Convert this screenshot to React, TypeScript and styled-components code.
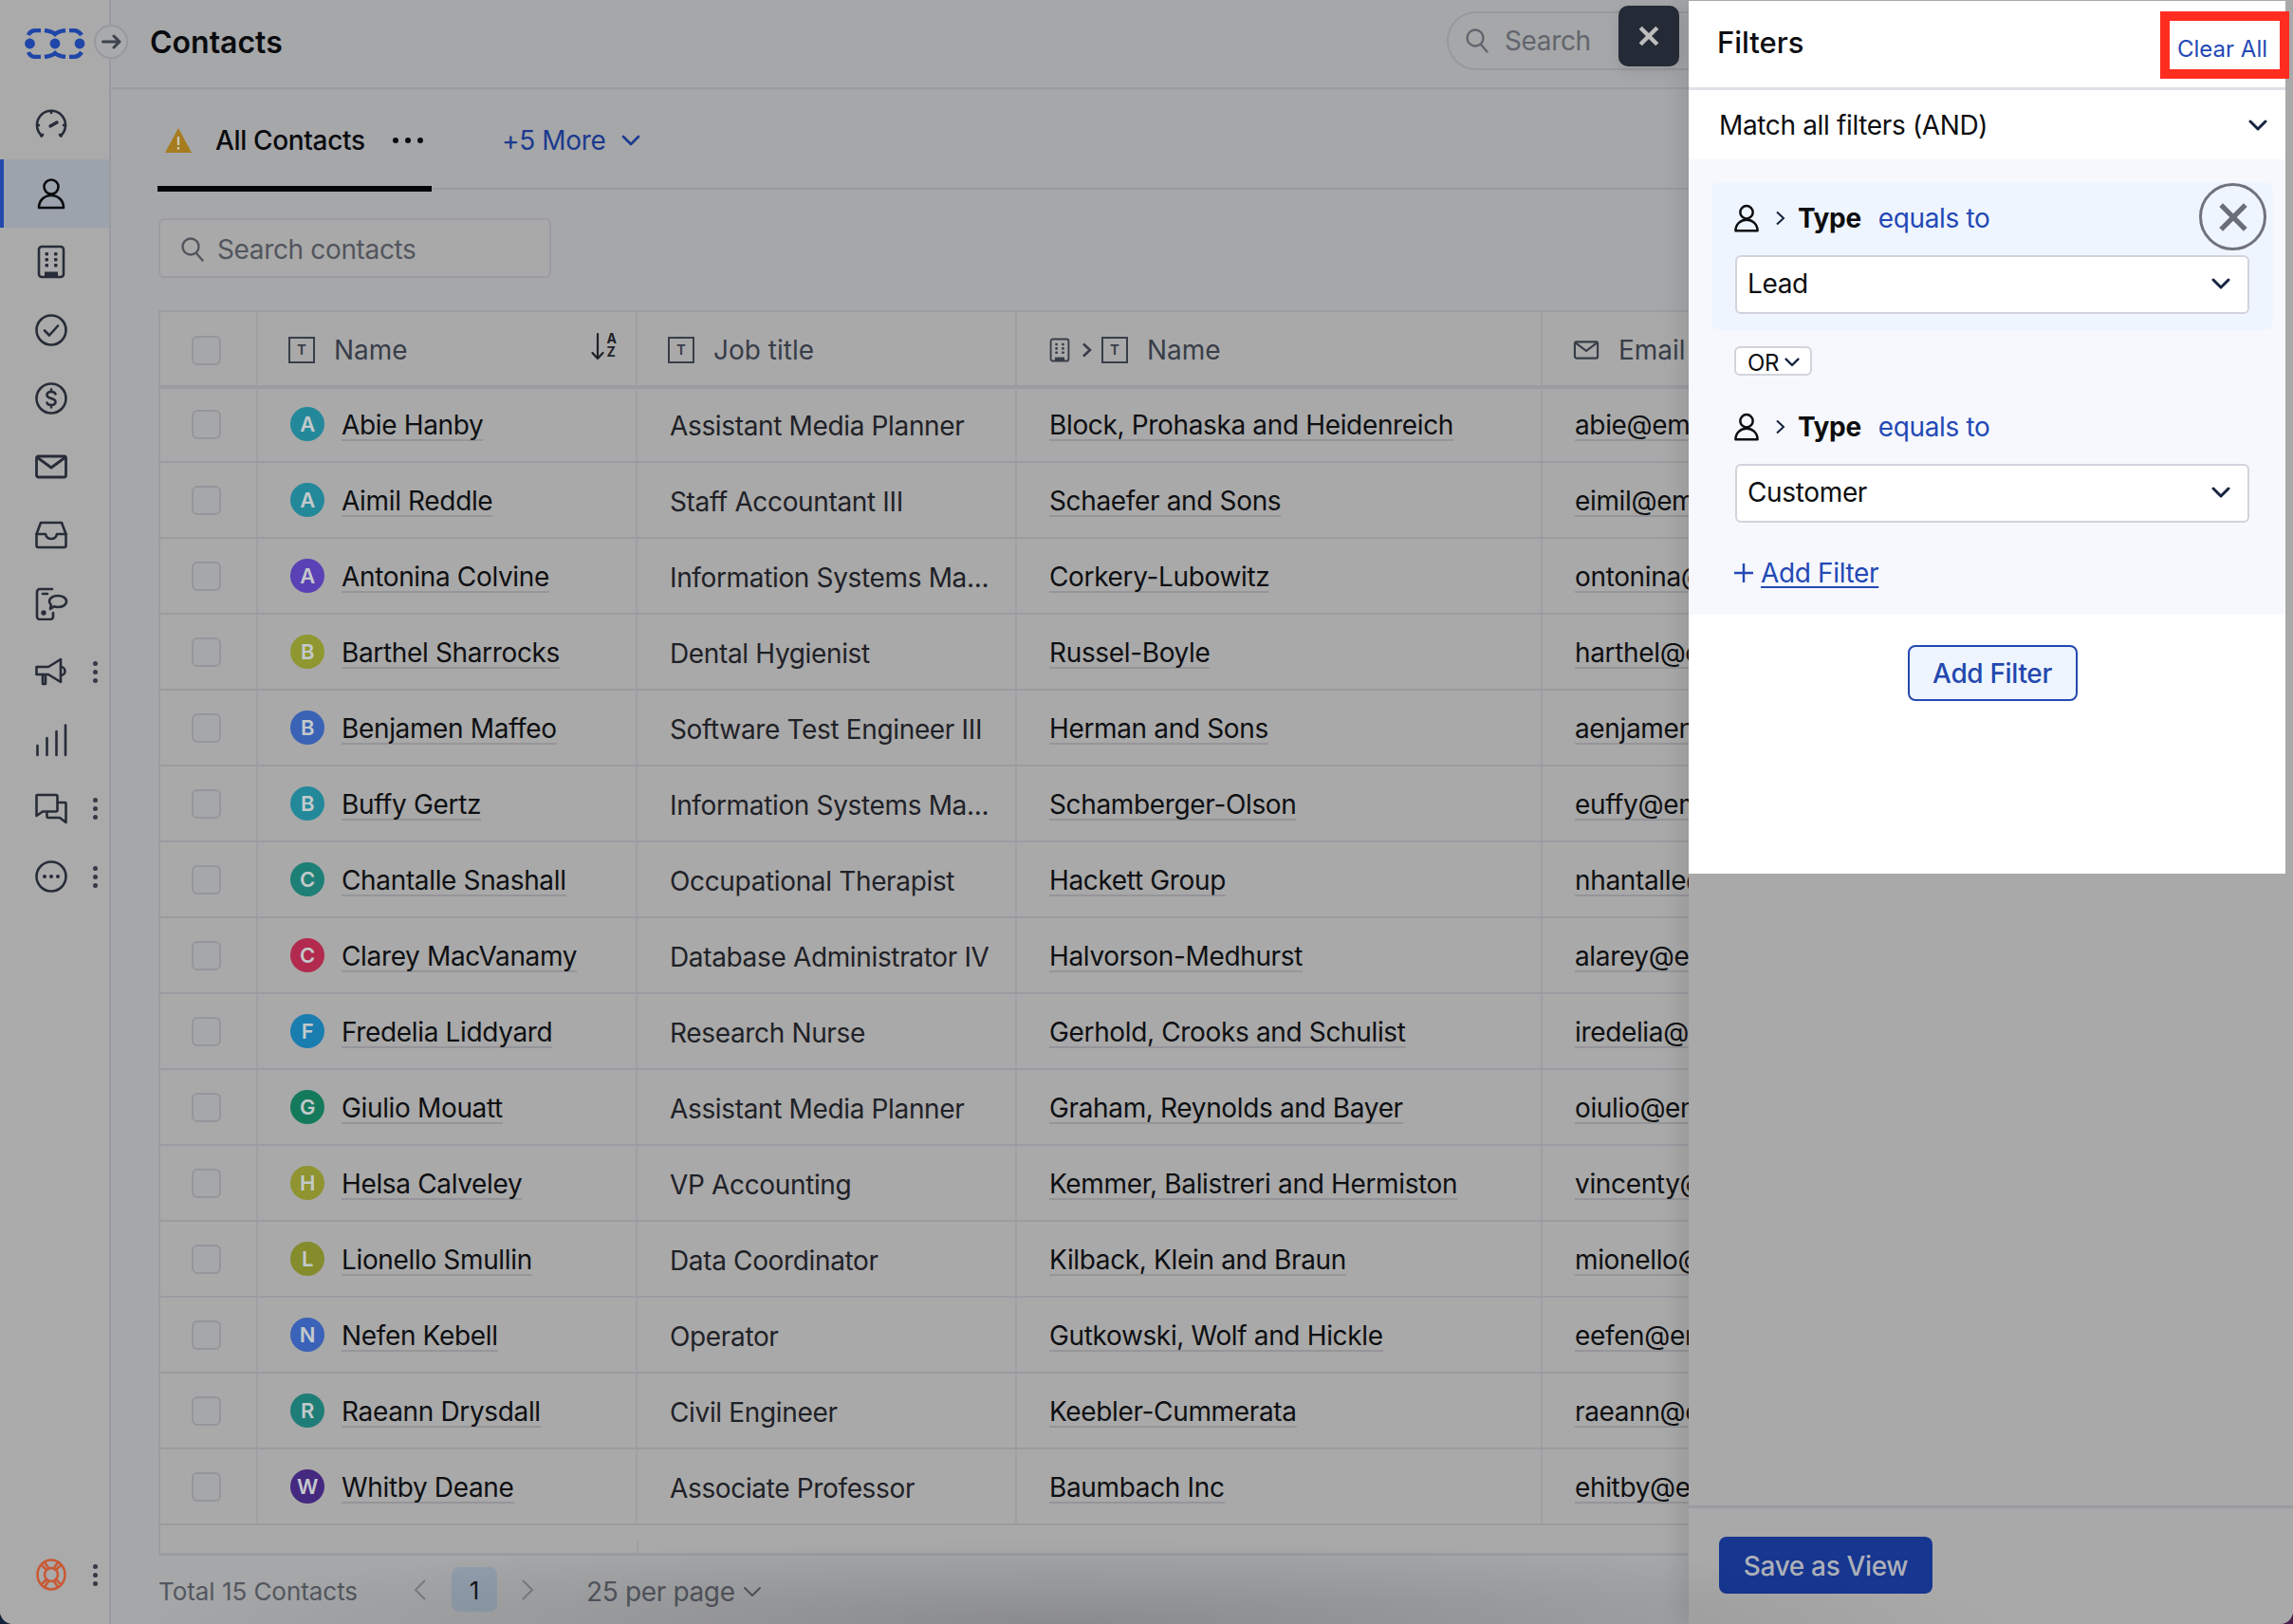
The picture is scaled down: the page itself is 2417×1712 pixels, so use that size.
import React from 'react';
import styled, { createGlobalStyle } from 'styled-components';

const GlobalStyle = createGlobalStyle`
	html, body {
		margin: 0;
		padding: 0;
		height: 100%;
		background: linear-gradient(90deg, #16233f 0%, #16233f 50%, #4a1f4d 100%);
		font-family: Inter, "Noto Sans", "Liberation Sans", sans-serif;
		overflow: hidden;
	}
	* {
		box-sizing: border-box;
	}
`;

const Shell = styled.div`
	position: relative;
	display: flex;
	width: 2417px;
	height: 1712px;
	overflow: hidden;
	background: #a9a9a9;
	border-radius: 0 0 14px 14px;
	letter-spacing: -0.35px;
`;

/* sidebar */
const Sidebar = styled.aside`
	position: relative;
	flex: 0 0 117px;
	display: flex;
	flex-direction: column;
	background: #aaaaaa;
	border-right: 2px solid #9a9ba0;
`;

const LogoSlot = styled.div`
	height: 96px;
	padding: 30px 0 0 26px;
`;

const ExpandButton = styled.div`
	position: absolute;
	top: 26px;
	right: -20px;
	z-index: 2;
	width: 36px;
	height: 36px;
	border-radius: 50%;
	border: 2px solid #98999e;
	background: #a9aaac;
	display: flex;
	align-items: center;
	justify-content: center;
	color: #3d424d;
`;

const NavItem = styled.div<{ $active?: boolean }>`
	height: 72px;
	display: flex;
	align-items: center;
	gap: 26px;
	padding-left: 36px;
	color: ${(p) => (p.$active ? '#0a0b0e' : '#272c38')};
	background: ${(p) => (p.$active ? '#9da3ad' : 'transparent')};
	box-shadow: ${(p) => (p.$active ? 'inset 4px 0 0 #2349ac' : 'none')};
`;

const NavFooter = styled(NavItem)`
	margin-top: auto;
	margin-bottom: 16px;
	color: #c85a35;
`;

const Kebab = styled.span`
	display: flex;
	flex-direction: column;
	gap: 4px;

	i {
		display: block;
		width: 5px;
		height: 5px;
		border-radius: 50%;
		background: #353a46;
	}
`;

/* main column */
const Main = styled.main`
	flex: 0 0 1663px;
	display: flex;
	flex-direction: column;
	overflow: hidden;
	background: #a6a7a9;
`;

const TopBar = styled.header`
	flex: 0 0 94px;
	min-height: 0;
	display: flex;
	align-items: center;
	justify-content: space-between;
	padding-left: 41px;
	border-bottom: 2px solid #9a9b9f;
`;

const PageTitle = styled.h1`
	margin: 0 0 4px;
	font-size: 32px;
	font-weight: 600;
	letter-spacing: 0;
	color: #0a0b0e;
`;

const GlobalSearch = styled.div`
	flex: 0 0 300px;
	margin-right: -45px;
	margin-top: -6px;
	height: 62px;
	display: flex;
	align-items: center;
	gap: 17px;
	padding-left: 18px;
	border: 2px solid #98999e;
	border-radius: 31px;
	font-size: 28px;
	color: #62656d;
`;

const TabBar = styled.div`
	flex: 0 0 106px;
	min-height: 0;
	display: flex;
	margin-left: 49px;
	border-bottom: 2px solid #9a9b9f;
`;

const ActiveTab = styled.div`
	flex: 0 0 289px;
	height: 108px;
	padding: 6px 0 0 8px;
	display: flex;
	align-items: center;
	border-bottom: 6px solid #05060a;
	font-size: 28px;
	font-weight: 500;
	color: #0a0b0e;
`;

const TabLabel = styled.span`
	margin-left: 25px;
`;

const TabDots = styled.span`
	display: flex;
	gap: 7px;
	margin-left: 29px;

	i {
		width: 6px;
		height: 6px;
		border-radius: 50%;
		background: #0a0b0e;
	}
`;

const MoreTabs = styled.div`
	margin-left: 74px;
	height: 100px;
	padding-top: 8px;
	display: flex;
	align-items: center;
	gap: 17px;
	font-size: 28px;
	color: #1c3a8e;
`;

const ContactSearch = styled.div`
	flex: 0 0 63px;
	width: 414px;
	margin: 30px 0 0 50px;
	display: flex;
	align-items: center;
	gap: 14px;
	padding: 3px 0 0 22px;
	border: 2px solid #9b9ca1;
	border-radius: 6px;
	background: #a9a9a9;
	font-size: 28px;
	color: #52555d;
`;

/* table */
const Table = styled.div`
	width: 1900px;
	margin: 34px 0 0 50px;
	border: 2px solid #9b9ca1;
	border-right: 0;
	border-bottom: 0;
	background: #a9a9a9;
	flex-shrink: 0;
`;

const Row = styled.div`
	display: grid;
	grid-template-columns: 103px 400px 400px 554px 1fr;
	height: 80px;
	border-bottom: 2px solid #9b9ca1;
`;

const HeadRow = styled(Row)`
	height: 81px;
	margin-bottom: -2px;
	border-bottom-width: 4px;
`;

const Cell = styled.div`
	display: flex;
	align-items: center;
	gap: 20px;
	padding-left: 34px;
	border-right: 2px solid #9f9fa4;
	font-size: 28px;
	color: #1f2127;
	white-space: nowrap;
	overflow: hidden;
`;

const JobCell = styled(Cell)`
	padding-top: 3px;
`;

const HeadCell = styled(Cell)`
	position: relative;
	font-weight: 400;
	letter-spacing: 0;
	color: #383d48;
	padding-left: 32px;
	padding-top: 2px;
`;

const CheckCell = styled(Cell)`
	padding-left: 33px;
`;

const HeadCheckCell = styled(CheckCell)`
	padding-top: 4px;
`;

const NameCell = styled(Cell)`
	gap: 18px;
`;

const Checkbox = styled.span`
	display: block;
	width: 31px;
	height: 31px;
	border: 2px solid #95969b;
	border-radius: 6px;
	background: #a6a7a9;
`;

const Avatar = styled.span<{ $color: string }>`
	flex: 0 0 36px;
	height: 36px;
	border-radius: 50%;
	background: ${(p) => p.$color};
	color: #c3c9cb;
	font-size: 22px;
	font-weight: 600;
	display: flex;
	align-items: center;
	justify-content: center;
`;

const LinkText = styled.span`
	display: inline-block;
	margin-top: 3px;
	line-height: 30px;
	border-bottom: 2px solid #95959a;
	color: #0e0f12;
`;

const TypeBox = styled.span`
	flex: 0 0 28px;
	height: 28px;
	border: 2px solid #383d48;
	display: flex;
	align-items: center;
	justify-content: center;
	font-size: 15px;
	font-weight: 600;
	color: #383d48;
`;

const SortIcon = styled.span`
	position: absolute;
	right: 20px;
	top: 21px;
	display: flex;
	gap: 3px;
	color: #1f2127;
`;

const SortLetters = styled.span`
	display: flex;
	flex-direction: column;
	font-size: 14px;
	font-weight: 700;
	line-height: 14px;
`;

const CompanyPath = styled.span`
	display: flex;
	align-items: center;
	gap: 10px;
`;

const TableEnd = styled.div`
	height: 32px;
	display: flex;
	align-items: flex-end;
	padding-left: 502px;
	border-bottom: 3px solid #9b9ca1;

	i {
		display: block;
		width: 2px;
		height: 12px;
		background: #9f9fa4;
	}
`;

const Pager = styled.div`
	height: 47px;
	margin: 12px 0 0 50px;
	display: flex;
	align-items: center;
	font-size: 26px;
	letter-spacing: -0.05px;
	color: #54575f;
`;

const PagerTotal = styled.span`
	width: 269px;
	margin-top: 4px;
`;

const PageNumber = styled.span`
	width: 48px;
	height: 47px;
	margin: 0 25px 0 26px;
	padding-top: 2px;
	display: flex;
	align-items: center;
	justify-content: center;
	border-radius: 8px;
	background: #919eac;
	color: #14161b;
`;

const PerPage = styled.span`
	margin: 4px 0 0 55px;
	display: flex;
	align-items: center;
	gap: 8px;
	font-size: 28px;
	letter-spacing: -0.35px;
`;

/* drawer under the dim layer */
const Drawer = styled.section`
	flex: 0 0 637px;
	display: flex;
	flex-direction: column;
	justify-content: flex-end;
	background: #a9a9a9;
	box-shadow: -10px 0 22px rgba(0, 0, 0, 0.09);
	position: relative;
`;

const DrawerFooter = styled.div`
	height: 125px;
	padding: 30px 0 0 32px;
	border-top: 3px solid #9b9ca1;
`;

const SaveButton = styled.button`
	width: 225px;
	height: 60px;
	margin: 0;
	border: 0;
	border-radius: 8px;
	background: #163690;
	color: #adb0b8;
	font: 500 28px Inter, sans-serif;
	letter-spacing: -0.35px;
	padding-top: 2px;
`;

const BottomShade = styled.div`
	position: absolute;
	left: 120px;
	right: 300px;
	bottom: 0;
	height: 90px;
	pointer-events: none;
	background: radial-gradient(ellipse 1000px 90px at 50% 100%, rgba(0, 0, 0, 0.17), rgba(0, 0, 0, 0) 100%);
`;

const DrawerClose = styled.div`
	position: absolute;
	left: 1706px;
	top: 6px;
	width: 64px;
	height: 64px;
	border-radius: 10px;
	background: #242a36;
	color: #bdbdbd;
	display: flex;
	align-items: center;
	justify-content: center;
	box-shadow: 0 4px 16px rgba(0, 0, 0, 0.1);
`;

/* filter popup */
const FilterPanel = styled.div`
	position: absolute;
	left: 1780px;
	top: 1px;
	width: 629px;
	height: 920px;
	display: flex;
	flex-direction: column;
	background: #ffffff;
	font-size: 28px;
	color: #0c0d10;
`;

const PanelHeader = styled.div`
	flex: 0 0 94px;
	min-height: 0;
	display: flex;
	justify-content: space-between;
	padding-left: 30px;
	border-bottom: 3px solid #e0e0e8;
`;

const PanelTitle = styled.h2`
	margin: 26px 0 0;
	font-size: 31px;
	line-height: 36px;
	font-weight: 500;
	letter-spacing: 0;
`;

const ClearAll = styled.a`
	width: 136px;
	height: 71px;
	margin: 11px -4px 0 0;
	border: 10px solid #ff2d20;
	background: #fff;
	position: relative;
	z-index: 2;
	display: flex;
	align-items: center;
	justify-content: center;
	padding: 7px 5px 0 0;
	font-size: 24px;
	letter-spacing: 0;
	white-space: nowrap;
	color: #2348b5;
`;

const MatchRow = styled.div`
	flex: 0 0 73px;
	display: flex;
	align-items: center;
	justify-content: space-between;
	padding: 0 19px 0 32px;
`;

const FilterList = styled.div`
	height: 480px;
	padding-top: 24px;
	background: #f6f8fd;
`;

const FilterBlock = styled.div<{ $active?: boolean }>`
	position: relative;
	margin: 0 13px 0 24px;
	padding: 0 25px;
	background: ${(p) => (p.$active ? '#eff5fe' : 'transparent')};
	border-radius: 8px;
	height: ${(p) => (p.$active ? '156px' : 'auto')};
`;

const FilterHead = styled.div`
	height: 77px;
	padding-bottom: 2px;
	display: flex;
	align-items: center;
	color: #0c0d10;
`;

const HeadIcon = styled.span`
	display: flex;
	margin-left: -4px;
`;

const HeadChevron = styled.span`
	display: flex;
	margin: 0 13px 0 14px;
`;

const FieldName = styled.strong`
	font-weight: 700;
	margin-right: 18px;
`;

const Operator = styled.span`
	color: #2348b5;
`;

const RemoveFilter = styled.div`
	position: absolute;
	right: 7px;
	top: 1px;
	width: 71px;
	height: 71px;
	border: 3px solid #70727c;
	border-radius: 50%;
	color: #6b6e78;
	display: flex;
	align-items: center;
	justify-content: center;
`;

const SelectBox = styled.div`
	height: 62px;
	display: flex;
	align-items: center;
	justify-content: space-between;
	padding: 0 18px 3px 11px;
	background: #fff;
	border: 2px solid #d2d3db;
	border-radius: 6px;
`;

const JoinSelect = styled.div`
	width: 82px;
	height: 31px;
	margin: 17px 0 16px 48px;
	display: flex;
	align-items: center;
	gap: 6px;
	padding: 3px 0 0 12px;
	background: #fff;
	border: 2px solid #d2d3db;
	border-radius: 6px;
	font-size: 24px;
`;

const AddFilterLink = styled.a`
	display: flex;
	align-items: center;
	gap: 8px;
	margin: 36px 0 0 48px;
	height: 34px;
	color: #2348b5;

	span {
		text-decoration: underline;
		text-underline-offset: 4px;
	}
`;

const AddFilterButton = styled.button`
	align-self: center;
	width: 179px;
	height: 59px;
	margin: 32px 0 0 11px;
	border: 2px solid #2348ae;
	border-radius: 8px;
	background: #eff5fe;
	color: #2348ae;
	font: 500 28px Inter, sans-serif;
	letter-spacing: -0.35px;
`;

/* icons */
const Svg = ({ size = 36, h, children, sw = 2.6 }: { size?: number; h?: number; children: React.ReactNode; sw?: number }) => (
	<svg width={size} height={h ?? size} viewBox={`0 0 ${size} ${h ?? size}`} fill="none" stroke="currentColor" strokeWidth={sw} strokeLinecap="round" strokeLinejoin="round" style={{ flex: 'none', display: 'block' }}>
		{children}
	</svg>
);

const Chevron = ({ w = 20, color = '#16233f', sw = 3 }: { w?: number; color?: string; sw?: number }) => (
	<svg width={w} height={w * 0.6} viewBox="0 0 20 12" fill="none" stroke={color} strokeWidth={sw} strokeLinecap="round" strokeLinejoin="round" style={{ flex: 'none', display: 'block' }}>
		<path d="M2 2 L10 10 L18 2" />
	</svg>
);

const Logo = () => (
	<svg width="64" height="32" viewBox="0 0 64 32" fill="none" stroke="#1f46a8" strokeWidth="4.4" style={{ display: 'block' }}>
		<path d="M17 2 H12 Q6 2 4 7 M21 2 Q29 3 32 6 Q35 3 43 2 M47 2 H51 Q57 2 60 7" />
		<path d="M17 30 H12 Q6 30 4 25 M21 30 Q29 29 32 26 Q35 29 43 30 M47 30 H51 Q57 30 60 25" />
		<g fill="#1f46a8" stroke="none">
			<circle cx="5.5" cy="16" r="5.4" />
			<circle cx="32" cy="16" r="5.4" />
			<circle cx="58" cy="16" r="5.4" />
		</g>
	</svg>
);

const GaugeIcon = () => (
	<Svg>
		<path d="M8 29 A15 15 0 1 1 28 29" />
		<path d="M18 3 V5 M5 18 H3 M33 18 H31 M9 28 L7.5 29.5 M27 28 L28.5 29.5" />
		<path d="M17 19 L24 15" strokeWidth="3.4" />
	</Svg>
);

const UserIcon = ({ size = 36, sw = 2.6 }: { size?: number; sw?: number }) => (
	<svg width={size} height={size} viewBox="0 0 36 36" fill="none" stroke="currentColor" strokeWidth={sw} strokeLinejoin="round" style={{ flex: 'none', display: 'block' }}>
		<circle cx="18" cy="11" r="7.5" />
		<path d="M5 33 C5 25 11 20 18 20 C25 20 31 25 31 33 Z" />
	</svg>
);

const BuildingIcon = ({ size = 36 }: { size?: number }) => (
	<svg width={size} height={size} viewBox="0 0 36 36" fill="none" stroke="currentColor" strokeWidth="2.6" style={{ flex: 'none', display: 'block' }}>
		<rect x="5" y="2" width="26" height="32" rx="3" />
		<g fill="currentColor" stroke="none">
			<rect x="11.5" y="8" width="3.5" height="3.5" rx="1" />
			<rect x="21" y="8" width="3.5" height="3.5" rx="1" />
			<rect x="11.5" y="14" width="3.5" height="3.5" rx="1" />
			<rect x="21" y="14" width="3.5" height="3.5" rx="1" />
			<rect x="11.5" y="20" width="3.5" height="3.5" rx="1" />
			<rect x="21" y="20" width="3.5" height="3.5" rx="1" />
			<rect x="11" y="28.5" width="14" height="5" />
		</g>
	</svg>
);

const CheckIcon = () => (
	<Svg>
		<circle cx="18" cy="18" r="15.5" />
		<path d="M11 18.5 L16 23.5 L25 13.5" />
	</Svg>
);

const DollarIcon = () => (
	<Svg>
		<circle cx="18" cy="18" r="15.5" />
		<path d="M22.5 13.5 C22 11.5 20 11 18 11 C15.5 11 13.5 12.3 13.5 14.5 C13.5 19 22.5 17 22.5 21.5 C22.5 23.7 20.5 25 18 25 C15.5 25 13.8 24 13.5 22.5 M18 8.5 V11 M18 25 V27.5" />
	</Svg>
);

const MailIcon = ({ size = 36 }: { size?: number }) => (
	<svg width={size} height={size} viewBox="0 0 36 36" fill="none" stroke="currentColor" strokeWidth="2.8" strokeLinejoin="round" style={{ flex: 'none', display: 'block' }}>
		<rect x="2.5" y="7" width="31" height="22" rx="2" />
		<path d="M3 8 L18 19 L33 8" />
	</svg>
);

const InboxIcon = () => (
	<Svg>
		<path d="M7 5 H29 L33.5 17 V29 A2 2 0 0 1 31.5 31 H4.5 A2 2 0 0 1 2.5 29 V17 Z" />
		<path d="M2.5 17 H12 Q13 22 18 22 Q23 22 24 17 H33.5" />
	</Svg>
);

const PhoneChatIcon = () => (
	<Svg>
		<path d="M19 3 H6 A3 3 0 0 0 3 6 V32 A3 3 0 0 0 6 35 H17 A3 3 0 0 0 20 32 V28" />
		<path d="M9 8 H14" />
		<circle cx="10" cy="28" r="1.4" fill="currentColor" />
		<path d="M25 10 C30 10 34 12.5 34 16 C34 19.5 30 22 25 22 C23.5 22 22.3 21.8 21 21.3 L17 24 L17.8 19.5 C16.6 18.5 16 17.3 16 16 C16 12.5 20 10 25 10 Z" />
	</Svg>
);

const MegaphoneIcon = () => (
	<Svg>
		<path d="M2.5 13 H15 L28 5 V29 L15 21 H2.5 Z" />
		<path d="M9 21 V31 H12 V22" />
		<path d="M28 13 A4.5 4.5 0 0 1 28 22" />
	</Svg>
);

const BarsIcon = () => (
	<Svg>
		<path d="M3.5 24 V34 M13.5 16 V34 M23.5 9 V34 M33 2.5 V34" />
	</Svg>
);

const ChatIcon = () => (
	<Svg>
		<path d="M3 4 H23 A1.5 1.5 0 0 1 24.5 5.5 V20 A1.5 1.5 0 0 1 23 21.5 H9 L2.5 26 V4.5 Z" />
		<path d="M25 12 H32.5 A1 1 0 0 1 33.5 13 V33 L27 28 H14.5 A1 1 0 0 1 13.5 27 V22" />
	</Svg>
);

const MoreIcon = () => (
	<Svg>
		<circle cx="18" cy="18" r="15.5" />
		<g fill="currentColor" stroke="none">
			<circle cx="11" cy="18" r="2" />
			<circle cx="18" cy="18" r="2" />
			<circle cx="25" cy="18" r="2" />
		</g>
	</Svg>
);

const LifeBuoyIcon = () => (
	<Svg sw={2.6}>
		<ellipse cx="18" cy="18" rx="14.5" ry="15.5" />
		<circle cx="18" cy="18" r="7" />
		<path d="M7.6 7.6 L13 13 M11 5 L15.5 11.5 M28.4 7.6 L23 13 M25 5 L20.5 11.5 M7.6 28.4 L13 23 M11 31 L15.5 24.5 M28.4 28.4 L23 23 M25 31 L20.5 24.5" />
	</Svg>
);

const SearchIcon = ({ color }: { color: string }) => (
	<svg width="24" height="26" viewBox="0 0 24 26" fill="none" stroke={color} strokeWidth="2.4" strokeLinecap="round" style={{ flex: 'none', display: 'block' }}>
		<circle cx="10" cy="10" r="8.5" />
		<path d="M16 17 L22.5 24.5" />
	</svg>
);

const WarningIcon = () => (
	<svg width="28" height="26" viewBox="0 0 28 26" style={{ flex: 'none', display: 'block' }}>
		<path d="M14 0 L28 26 H0 Z" fill="#a67c1f" />
		<rect x="12.8" y="9" width="2.4" height="9" fill="#c9c5b5" />
		<rect x="12.8" y="20" width="2.4" height="2.6" fill="#c9c5b5" />
	</svg>
);

const XIcon = ({ size, sw }: { size: number; sw: number }) => (
	<svg width={size} height={size} viewBox="0 0 30 30" fill="none" stroke="currentColor" strokeWidth={sw} style={{ display: 'block' }}>
		<path d="M3 3 L27 27 M27 3 L3 27" />
	</svg>
);

const Dots = () => (
	<Kebab>
		<i />
		<i />
		<i />
	</Kebab>
);

const navItems = [
	{ icon: <GaugeIcon /> },
	{ icon: <UserIcon />, active: true },
	{ icon: <BuildingIcon /> },
	{ icon: <CheckIcon /> },
	{ icon: <DollarIcon /> },
	{ icon: <MailIcon /> },
	{ icon: <InboxIcon /> },
	{ icon: <PhoneChatIcon /> },
	{ icon: <MegaphoneIcon />, menu: true },
	{ icon: <BarsIcon /> },
	{ icon: <ChatIcon />, menu: true },
	{ icon: <MoreIcon />, menu: true },
];

const contacts = [
	['Abie Hanby', '#23899a', 'Assistant Media Planner', 'Block, Prohaska and Heidenreich', 'abie@email.com'],
	['Aimil Reddle', '#23899a', 'Staff Accountant III', 'Schaefer and Sons', 'eimil@email.com'],
	['Antonina Colvine', '#5a41b5', 'Information Systems Ma...', 'Corkery-Lubowitz', 'ontonina@email.com'],
	['Barthel Sharrocks', '#8f9730', 'Dental Hygienist', 'Russel-Boyle', 'harthel@email.com'],
	['Benjamen Maffeo', '#3a62b5', 'Software Test Engineer III', 'Herman and Sons', 'aenjamen@email.com'],
	['Buffy Gertz', '#23899a', 'Information Systems Ma...', 'Schamberger-Olson', 'euffy@email.com'],
	['Chantalle Snashall', '#1e7f76', 'Occupational Therapist', 'Hackett Group', 'nhantalle@email.com'],
	['Clarey MacVanamy', '#b22b4f', 'Database Administrator IV', 'Halvorson-Medhurst', 'alarey@email.com'],
	['Fredelia Liddyard', '#1a7db0', 'Research Nurse', 'Gerhold, Crooks and Schulist', 'iredelia@email.com'],
	['Giulio Mouatt', '#147a5b', 'Assistant Media Planner', 'Graham, Reynolds and Bayer', 'oiulio@email.com'],
	['Helsa Calveley', '#8f9430', 'VP Accounting', 'Kemmer, Balistreri and Hermiston', 'vincenty@email.com'],
	['Lionello Smullin', '#858c2c', 'Data Coordinator', 'Kilback, Klein and Braun', 'mionello@email.com'],
	['Nefen Kebell', '#3a62b8', 'Operator', 'Gutkowski, Wolf and Hickle', 'eefen@email.com'],
	['Raeann Drysdall', '#1f7d77', 'Civil Engineer', 'Keebler-Cummerata', 'raeann@email.com'],
	['Whitby Deane', '#45287f', 'Associate Professor', 'Baumbach Inc', 'ehitby@email.com'],
];

const FilterRowHead = () => (
	<FilterHead>
		<HeadIcon>
			<UserIcon size={32} sw={2.8} />
		</HeadIcon>
		<HeadChevron>
			<svg width="11" height="16" viewBox="0 0 11 16" fill="none" stroke="#16233f" strokeWidth="2">
				<path d="M2 1.5 L9 8 L2 14.5" />
			</svg>
		</HeadChevron>
		<FieldName>Type</FieldName>
		<Operator>equals to</Operator>
	</FilterHead>
);

const App = () => {
	return (
		<Shell>
			<GlobalStyle />
			<Sidebar>
				<LogoSlot>
					<Logo />
				</LogoSlot>
				<ExpandButton>
					<svg width="21" height="16" viewBox="0 0 21 16" fill="none" stroke="currentColor" strokeWidth="3" strokeLinecap="round" strokeLinejoin="round">
						<path d="M1.5 8 H19 M13 2 L19 8 L13 14" />
					</svg>
				</ExpandButton>
				{navItems.map((item, index) => (
					<NavItem key={index} $active={item.active}>
						{item.icon}
						{item.menu && <Dots />}
					</NavItem>
				))}
				<NavFooter>
					<LifeBuoyIcon />
					<Dots />
				</NavFooter>
			</Sidebar>

			<Main>
				<TopBar>
					<PageTitle>Contacts</PageTitle>
					<GlobalSearch>
						<SearchIcon color="#62656d" />
						Search
					</GlobalSearch>
				</TopBar>
				<TabBar>
					<ActiveTab>
						<WarningIcon />
						<TabLabel>All Contacts</TabLabel>
						<TabDots>
							<i />
							<i />
							<i />
						</TabDots>
					</ActiveTab>
					<MoreTabs>
						+5 More
						<Chevron color="#1c3a8e" sw={2.6} />
					</MoreTabs>
				</TabBar>
				<ContactSearch>
					<SearchIcon color="#52555d" />
					Search contacts
				</ContactSearch>

				<Table>
					<HeadRow>
						<HeadCheckCell>
							<Checkbox />
						</HeadCheckCell>
						<HeadCell>
							<TypeBox>T</TypeBox>
							Name
							<SortIcon>
								<svg width="14" height="30" viewBox="0 0 14 30" fill="none" stroke="currentColor" strokeWidth="2.2" strokeLinecap="round" strokeLinejoin="round">
									<path d="M7 2 V28 M1.5 22 L7 28 L12.5 22" />
								</svg>
								<SortLetters>
									<span>A</span>
									<span>Z</span>
								</SortLetters>
							</SortIcon>
						</HeadCell>
						<HeadCell>
							<TypeBox>T</TypeBox>
							Job title
						</HeadCell>
						<HeadCell>
							<CompanyPath>
								<BuildingIcon size={26} />
								<svg width="11" height="16" viewBox="0 0 11 16" fill="none" stroke="currentColor" strokeWidth="2.6">
									<path d="M2 1.5 L9 8 L2 14.5" />
								</svg>
								<TypeBox>T</TypeBox>
							</CompanyPath>
							Name
						</HeadCell>
						<HeadCell>
							<MailIcon size={28} />
							Email
						</HeadCell>
					</HeadRow>
					{contacts.map(([name, color, job, company, email]) => (
						<Row key={name}>
							<CheckCell>
								<Checkbox />
							</CheckCell>
							<NameCell>
								<Avatar $color={color}>{name[0]}</Avatar>
								<LinkText>{name}</LinkText>
							</NameCell>
							<JobCell>{job}</JobCell>
							<Cell>
								<LinkText>{company}</LinkText>
							</Cell>
							<Cell>
								<LinkText>{email}</LinkText>
							</Cell>
						</Row>
					))}
					<TableEnd>
						<i />
					</TableEnd>
				</Table>

				<Pager>
					<PagerTotal>Total 15 Contacts</PagerTotal>
					<svg width="14" height="24" viewBox="0 0 14 24" fill="none" stroke="#7c7e85" strokeWidth="2">
						<path d="M12 2 L2 12 L12 22" />
					</svg>
					<PageNumber>1</PageNumber>
					<svg width="14" height="24" viewBox="0 0 14 24" fill="none" stroke="#7c7e85" strokeWidth="2">
						<path d="M2 2 L12 12 L2 22" />
					</svg>
					<PerPage>
						25 per page
						<Chevron color="#54575f" sw={2} />
					</PerPage>
				</Pager>
			</Main>

			<Drawer>
				<DrawerFooter>
					<SaveButton>Save as View</SaveButton>
				</DrawerFooter>
			</Drawer>

			<BottomShade />

			<DrawerClose>
				<XIcon size={22} sw={6} />
			</DrawerClose>

			<FilterPanel>
				<PanelHeader>
					<PanelTitle>Filters</PanelTitle>
					<ClearAll>Clear All</ClearAll>
				</PanelHeader>
				<MatchRow>
					Match all filters (AND)
					<Chevron />
				</MatchRow>
				<FilterList>
					<FilterBlock $active>
						<FilterRowHead />
						<SelectBox>
							Lead
							<Chevron />
						</SelectBox>
						<RemoveFilter>
							<XIcon size={32} sw={5} />
						</RemoveFilter>
					</FilterBlock>
					<JoinSelect>
						OR
						<Chevron w={16} />
					</JoinSelect>
					<FilterBlock>
						<FilterRowHead />
						<SelectBox>
							Customer
							<Chevron />
						</SelectBox>
					</FilterBlock>
					<AddFilterLink>
						<svg width="20" height="20" viewBox="0 0 20 20" fill="none" stroke="currentColor" strokeWidth="2.4">
							<path d="M10 0 V20 M0 10 H20" />
						</svg>
						<span>Add Filter</span>
					</AddFilterLink>
				</FilterList>
				<AddFilterButton>Add Filter</AddFilterButton>
			</FilterPanel>
		</Shell>
	);
};

export default App;
